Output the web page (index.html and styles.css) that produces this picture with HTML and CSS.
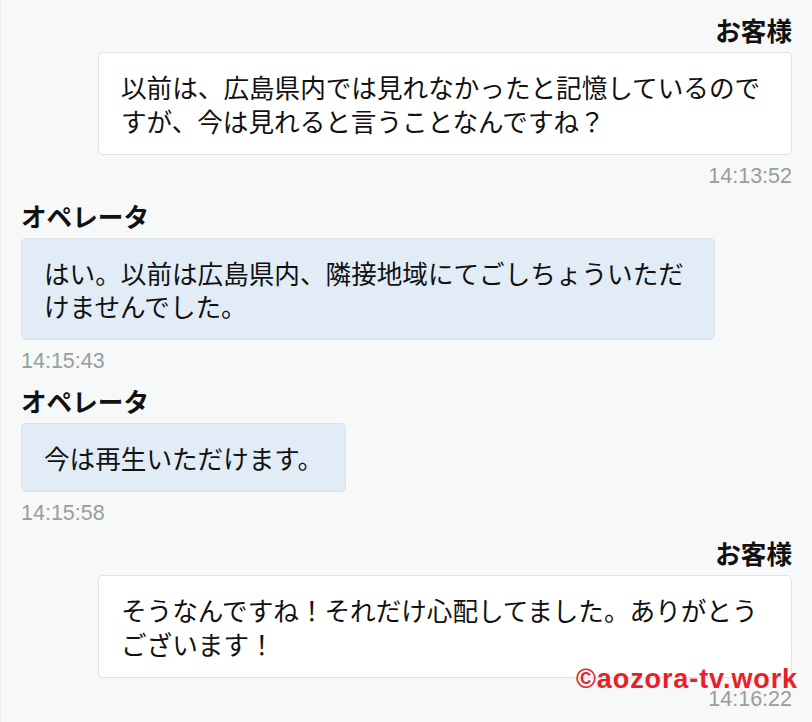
FILE: index.html
```html
<!DOCTYPE html>
<html lang="ja">
<head>
<meta charset="utf-8">
<title>チャット</title>
<link rel="stylesheet" href="styles.css">
</head>
<body>
<div class="chat">
  <div class="msg customer">
    <div class="name">お客様</div>
    <div class="bubble">以前は、広島県内では見れなかったと記憶しているのですが、今は見れると言うことなんですね？</div>
    <div class="time">14:13:52</div>
  </div>
  <div class="msg operator">
    <div class="name">オペレータ</div>
    <div class="bubble">はい。以前は広島県内、隣接地域にてごしちょういただけませんでした。</div>
    <div class="time">14:15:43</div>
  </div>
  <div class="msg operator">
    <div class="name">オペレータ</div>
    <div class="bubble">今は再生いただけます。</div>
    <div class="time">14:15:58</div>
  </div>
  <div class="msg customer">
    <div class="name">お客様</div>
    <div class="bubble">そうなんですね！それだけ心配してました。ありがとうございます！</div>
    <div class="time">14:16:22</div>
  </div>
  <div class="watermark">©aozora-tv.work</div>
</div>
</body>
</html>
```
FILE: styles.css
```css
html, body {
  margin: 0;
  padding: 0;
  background: #f7f8f8;
}
body {
  font-family: "Noto Sans CJK JP", "Noto Sans", sans-serif;
  color: #111;
}
.chat {
  position: relative;
  height: 722px;
  box-sizing: border-box;
  padding: 14px 20px 0 20px;
  border-left: 1px solid #eceeee;
  overflow: hidden;
}
.msg {
  display: flex;
  flex-direction: column;
  margin-bottom: 11px;
}
.msg.customer {
  align-items: flex-end;
}
.msg.operator {
  align-items: flex-start;
}
.name {
  font-size: 25.6px;
  line-height: 32px;
  font-weight: 700;
  margin-bottom: 6px;
}
.bubble {
  box-sizing: border-box;
  max-width: 694px;
  font-size: 25.6px;
  line-height: 33.5px;
  padding: 17px 22px 16.5px 22px;
  border-radius: 5px;
  border: 1px solid #dfe3e7;
  background: #fff;
}
.operator .bubble {
  background: #e1ecf7;
  border-color: #d6e2ed;
}
.time {
  margin-top: 8px;
  font-family: "Liberation Sans", Arial, sans-serif;
  font-size: 21.5px;
  line-height: 26px;
  color: #979da2;
}
.watermark {
  position: absolute;
  right: 14px;
  top: 664px;
  font-family: "Liberation Sans", Arial, sans-serif;
  font-weight: 700;
  font-size: 27px;
  line-height: 30px;
  letter-spacing: 0.9px;
  color: #e8202a;
}
```
